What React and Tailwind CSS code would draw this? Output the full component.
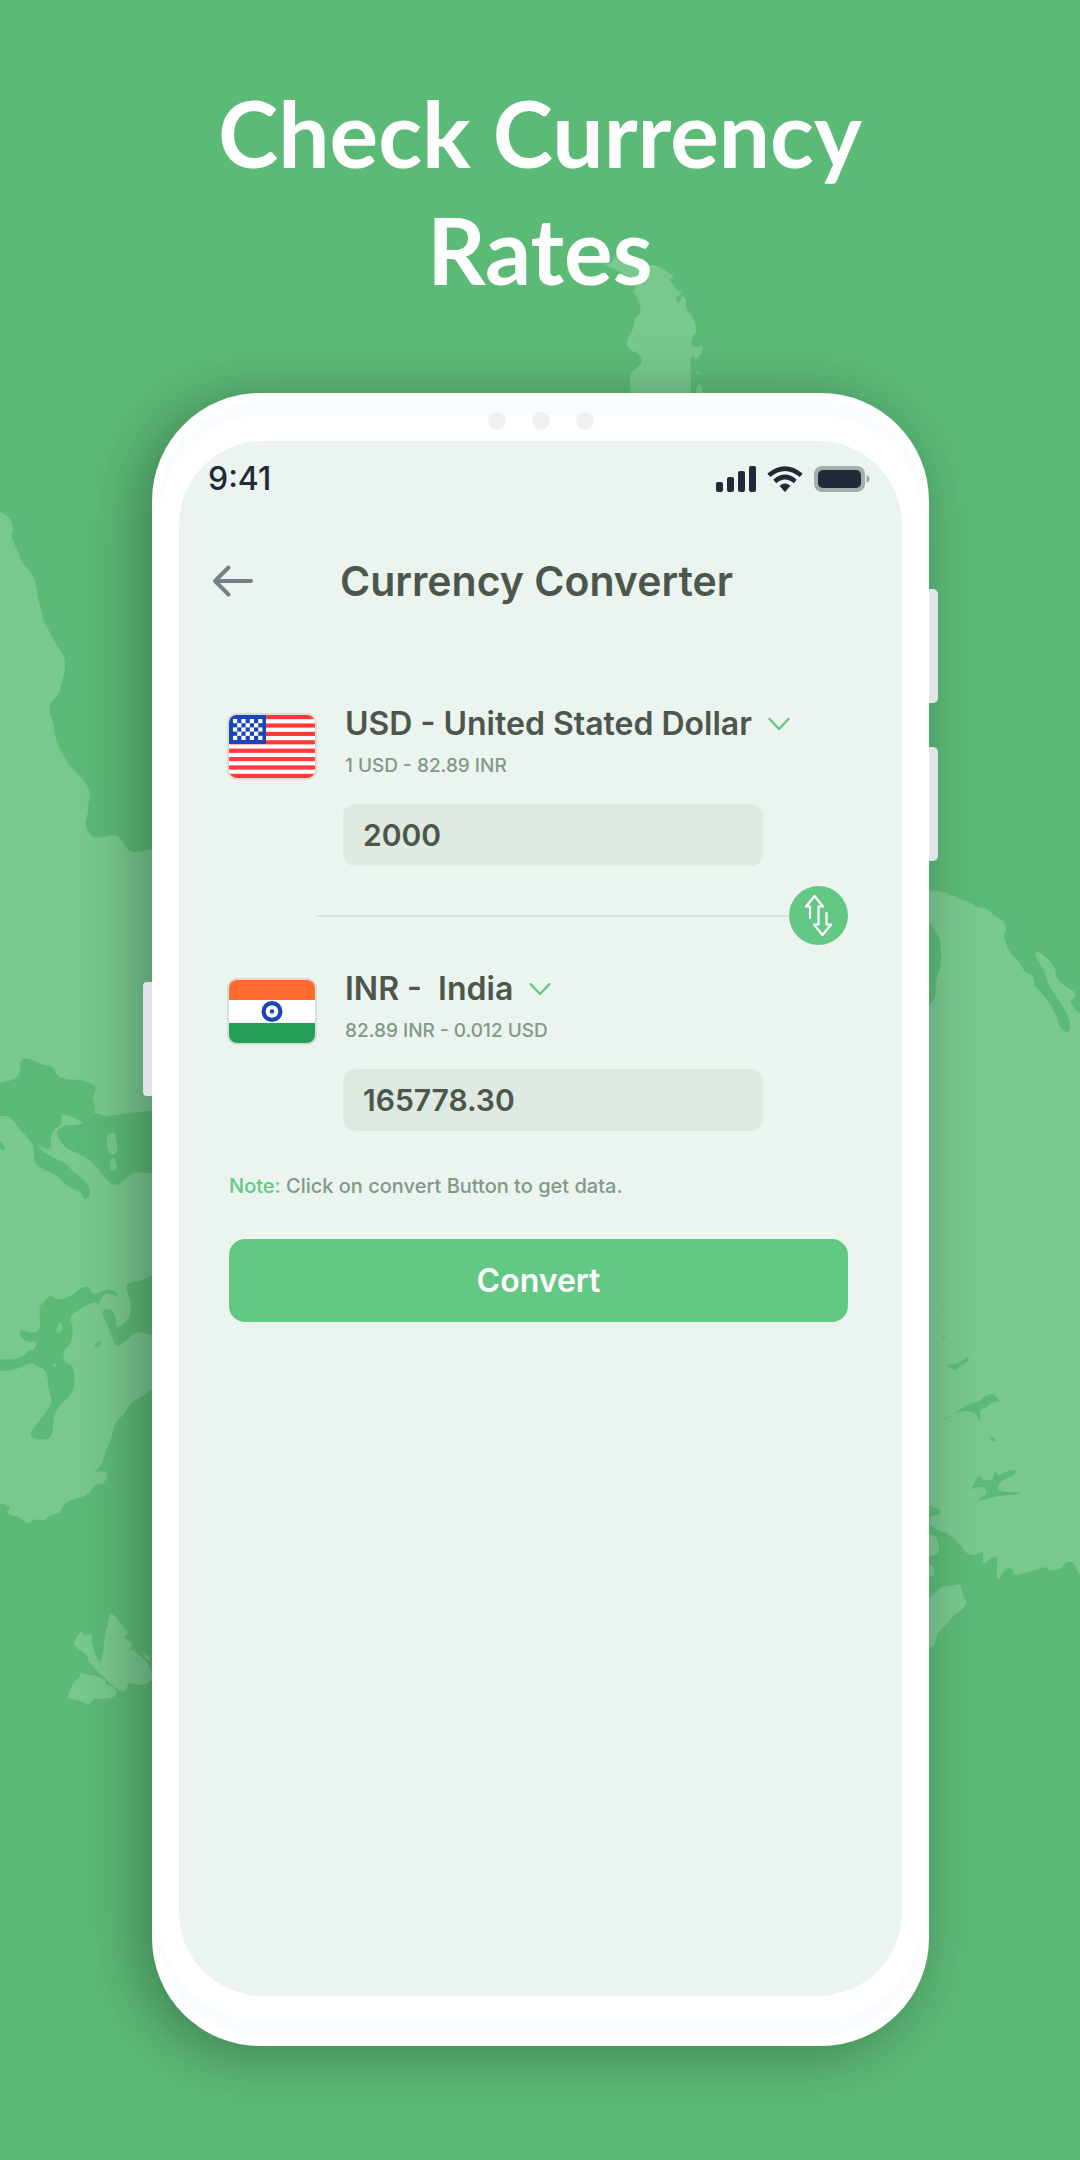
import React, { useState } from "react";

const RATE = 82.88915;

// Closed outline through the midpoints of the given points
const smooth = (text) => {
    const pts = text.split(" ").map((p) => p.split(",").map(Number));
    const mid = (a, b) => `${(a[0] + b[0]) / 2},${(a[1] + b[1]) / 2}`;
    const last = pts[pts.length - 1];
    const curves = pts.map((p, i) => `Q${p[0]},${p[1]} ${mid(p, pts[(i + 1) % pts.length])}`);
    return `M${mid(last, pts[0])}${curves.join("")}Z`;
};

const LAND = [
    "-20,505 0,512 9,516 13,526 13,532 11,537 14,543 18,551 22,563 32,573 36,584 38,599 41,608 42,618 50,633 58,648 65,656 65,672 61,684 60,693 50,703 49,712 54,723 55,739 62,753 70,767 83,778 91,793 88,804 88,813 85,824 88,832 94,839 107,836 119,835 126,849 134,853 152,849 200,845 200,1110 152,1110 138,1112 128,1113 105,1117 100,1113 93,1114 96,1106 91,1098 98,1088 85,1080 62,1079 56,1074 53,1066 42,1065 26,1057 19,1062 21,1069 17,1079 0,1083 -20,1083",
    "-20,1116 0,1116 10,1116 19,1129 33,1143 34,1152 34,1163 44,1170 56,1175 70,1188 82,1192 83,1200 90,1197 90,1189 85,1180 74,1173 66,1163 58,1160 49,1155 39,1149 40,1145 47,1150 52,1146 50,1137 54,1129 62,1125 61,1113 70,1116 82,1121 82,1125 64,1125 56,1131 58,1138 66,1149 85,1156 98,1168 108,1182 116,1186 124,1181 134,1171 152,1174 200,1174 200,1388 152,1388 146,1395 136,1400 130,1403 124,1415 114,1423 112,1438 105,1452 102,1465 92,1473 109,1470 104,1485 96,1483 90,1493 80,1498 70,1500 62,1506 60,1514 52,1514 42,1522 34,1518 28,1525 22,1518 4,1513 13,1507 0,1503 -20,1500",
    "106,1136 111,1132 116,1133 118,1152 114,1155 108,1154",
    "110,1160 113,1157 117,1163 117,1170 110,1172",
    "110,1611 118,1620 130,1634 122,1637 133,1643 132,1648 120,1654 130,1648 142,1656 152,1670 152,1682 140,1686 128,1681 127,1690 120,1692 110,1683 98,1672 87,1660 88,1655 73,1646 75,1639 82,1630 84,1637 92,1632 92,1645 99,1664 103,1655 105,1633 108,1624",
    "68,1696 73,1682 80,1678 80,1672 88,1675 96,1675 107,1681 105,1685 115,1687 117,1696 108,1699 92,1698 90,1706 80,1700 68,1699",
    "142,1650 150,1657 151,1662 144,1657",
    "596,262 610,266 616,254 624,258 634,260 643,268 652,264 662,268 676,278 668,278 675,287 677,291 682,291 680,296 675,296 679,305 682,296 686,298 686,310 693,316 697,332 692,336 691,346 697,348 703,344 702,353 695,361 694,355 690,358 691,372 691,420 628,420 631,382 629,374 643,363 640,355 630,350 625,343 634,328 634,319 642,312 638,298 632,291 637,287 632,284 625,274 612,268",
    "696,388 700,383 702,388 703,400 696,400",
    "695,371 700,372 699,375",
    "880,885 929,891 935,890 948,893 958,899 968,901 978,908 987,908 995,917 1003,920 1007,928 1003,936 1009,952 1022,965 1024,972 1035,977 1033,985 1042,993 1051,1006 1057,1017 1060,1029 1070,1034 1070,1019 1060,1002 1052,990 1048,984 1045,971 1035,957 1036,951 1042,953 1056,968 1055,977 1066,987 1076,992 1075,998 1069,1002 1080,1015 1100,1020 1100,1590 1080,1578 1075,1564 1067,1560 1062,1569 1048,1571 1047,1566 1030,1572 1013,1576 1013,1568 1005,1568 999,1581 996,1576 998,1554 990,1559 982,1566 984,1550 975,1556 965,1553 959,1542 945,1532 936,1530 929,1522 880,1500",
    "920,1536 934,1534 939,1542 939,1552 934,1556 920,1556",
    "920,1563 933,1564 935,1574 930,1577 920,1577",
    "920,1600 929,1599 938,1589 946,1585 950,1587 961,1583 963,1597 968,1603 960,1611 950,1619 948,1623 937,1633 935,1645 929,1648 920,1648",
];

const WATER = [
    "-20,1359 0,1359 12,1360 24,1356 29,1350 37,1346 36,1340 28,1343 20,1337 20,1328 31,1334 40,1330 40,1318 39,1306 45,1302 50,1294 56,1300 68,1298 84,1286 91,1288 92,1296 108,1288 117,1292 119,1297 104,1292 99,1305 95,1302 88,1304 82,1308 71,1315 70,1322 73,1324 72,1343 63,1350 64,1363 74,1365 75,1388 68,1398 54,1411 53,1430 50,1439 38,1440 29,1436 35,1426 50,1407 52,1400 48,1387 47,1370 35,1366 32,1362 16,1370 0,1371 -20,1371",
    "200,1266 152,1275 140,1281 125,1283 129,1297 131,1303 130,1318 116,1330 116,1316 110,1308 100,1311 110,1330 115,1347 121,1345 137,1330 152,1336 200,1340",
    "95,1343 102,1340 100,1347 95,1348",
    "-10,1130 0,1140 7,1151 0,1149 -10,1140",
    "920,920 929,921 937,933 941,943 941,967 936,979 936,997 929,1006 920,1006",
    "940,1306 943,1305 942,1308",
    "942,1337 946,1335 944,1339",
    "944,1364 950,1365 956,1364 964,1360 968,1356 969,1361 960,1366 955,1371 949,1366",
    "941,1420 946,1419 954,1414 970,1402 978,1403 984,1396 994,1393 1001,1403 992,1401 987,1408 979,1409 982,1424 974,1411 960,1411",
    "970,1491 979,1474 983,1481 993,1480 993,1474 997,1470 997,1477 1009,1470 1018,1470 1012,1477 1005,1478 996,1487 1002,1492 1020,1492 1020,1495 1000,1495 977,1502 980,1497 988,1494 984,1487 976,1487",
    "920,1504 932,1506 942,1511 939,1515 929,1516 931,1530 920,1530",
    "990,1436 995,1437 996,1443 991,1440",
];

const ISLES = [
    "56,1331 59,1322 63,1324 62,1331 57,1334",
    "100,1309 101,1297 107,1293 111,1301 107,1309",
    "30,1349 33,1346 35,1349 32,1351",
    "52,1365 55,1363 57,1366 54,1367",
];

const MapBackground = () => (
    <svg
        aria-hidden="true"
        viewBox="0 0 1080 2160"
        preserveAspectRatio="xMidYMid slice"
        className="absolute inset-0 w-full h-full"
    >
        <g fill="#78c88f">{LAND.map((p) => <path key={p} d={smooth(p)} />)}</g>
        <g fill="#5cba77">{WATER.map((p) => <path key={p} d={smooth(p)} />)}</g>
        <g fill="#78c88f">{ISLES.map((p) => <path key={p} d={smooth(p)} />)}</g>
    </svg>
);

const StatusIcons = () => (
    <div className="flex items-center gap-[11px] text-[#1f2c37]">
        <svg width="40" height="26" viewBox="0 0 40 26" fill="currentColor" aria-hidden="true">
            <rect x="0" y="16" width="7" height="10" rx="2" />
            <rect x="11" y="11" width="7" height="15" rx="2" />
            <rect x="22" y="5" width="7" height="21" rx="2" />
            <rect x="33" y="0" width="7" height="26" rx="2" />
        </svg>
        <svg width="36" height="26" viewBox="0 0 36 26" fill="none" stroke="currentColor" strokeWidth="4.6" aria-hidden="true">
            <path d="M1.8 9.3 Q18 -4.2 34.2 9.3" />
            <path d="M7.8 15.4 Q18 6.6 28.2 15.4" />
            <path d="M12.6 19.8 Q18 15 23.4 19.8 L18.6 25.4 Q18 26 17.4 25.4Z" fill="currentColor" stroke="none" />
        </svg>
        <svg width="56" height="26" viewBox="0 0 56 26" fill="#1f2c37" aria-hidden="true">
            <rect width="51" height="26" rx="8" fillOpacity="0.35" />
            <rect x="4" y="4" width="43" height="18" rx="5" />
            <path d="M52.5 9 Q55.6 10.5 55.6 13 Q55.6 15.5 52.5 17Z" fillOpacity="0.4" />
        </svg>
    </div>
);

const UsFlag = () => (
    <svg viewBox="0 0 86 63" className="block w-full" role="img" aria-label="United States">
        <rect width="86" height="63" fill="#fff" />
        {[0, 1, 2, 3, 4, 5, 6, 7].map((i) => (
            <rect key={i} y={i * 8.4} width="86" height="4.2" fill="#ff3a3a" />
        ))}
        <rect width="37" height="29" fill="#1a47b8" />
        {[0, 1, 2, 3, 4].map((row) =>
            [0, 1, 2, 3, 4, 5, 6]
                .filter((col) => (row + col) % 2 === 0)
                .map((col) => (
                    <rect key={`${row}-${col}`} x={4 + col * 4.2} y={4 + row * 4.2} width="4.2" height="4.2" fill="#fff" />
                ))
        )}
    </svg>
);

const InFlag = () => (
    <svg viewBox="0 0 86 63" className="block w-full" role="img" aria-label="India">
        <rect width="86" height="63" fill="#fff" />
        <rect width="86" height="20" fill="#ff6c2d" />
        <rect y="43" width="86" height="20" fill="#249f58" />
        <circle cx="43" cy="31.5" r="8.4" fill="none" stroke="#1a47b8" strokeWidth="4.2" />
        <circle cx="43" cy="31.5" r="2.2" fill="#1a47b8" />
    </svg>
);

const CurrencyRow = ({ id, flag, name, rate, value, onChange }) => (
    <div className="flex items-start gap-[26px]">
        <div className="w-[90px] shrink-0 rounded-[10px] border-2 border-[#d3dfd7] overflow-hidden">{flag}</div>
        <div className="flex-1 min-w-0 mr-[85px]">
            <div className="flex items-center gap-[16px] h-8 -mt-[5px] pl-[2px]">
                <select
                    aria-label={`${id} currency`}
                    className="appearance-none field-sizing-content shrink-0 bg-transparent text-[32px] leading-8 font-semibold text-[#4b564c] outline-none"
                >
                    <option>{name}</option>
                </select>
                <svg width="22" height="14" viewBox="0 0 22 14" fill="none" stroke="#64c885" strokeWidth="2.4" strokeLinecap="round" strokeLinejoin="round" className="pointer-events-none shrink-0" aria-hidden="true">
                    <path d="M1.5 2 L11 12 L20.5 2" />
                </svg>
            </div>
            <label htmlFor={id} className="block mt-[14px] pl-[2px] text-[19px] leading-6 font-medium text-[#7f9a86]">
                {rate}
            </label>
            <input
                id={id}
                value={value}
                onChange={onChange}
                inputMode="decimal"
                className="block w-full h-[62px] mt-[26px] px-5 rounded-xl bg-[#dfeae1] text-[30px] font-semibold text-[#4b564c] outline-none"
            />
        </div>
    </div>
);

const App = () => {
    const [usd, setUsd] = useState("2000");
    const [inr, setInr] = useState("165778.30");

    const convert = () => {
        setInr(((parseFloat(usd) || 0) * RATE).toFixed(2));
    };

    const swap = () => {
        setUsd(inr);
        setInr(usd);
    };

    return (
        <div className="relative min-h-screen overflow-hidden bg-[#5cba77] font-['Inter',sans-serif]">
            <MapBackground />

            <main className="relative pt-[74px] pb-[114px]">
                <h1 className="max-w-[760px] mx-auto text-center text-white font-['Lato',sans-serif] font-bold text-[91px] leading-[117px]">
                    Check Currency Rates
                </h1>

                {/* Phone */}
                <div className="relative ml-[152px] mr-[151px] mt-[85px] px-[7px] pt-[7px] pb-[10px] rounded-[108px] bg-white shadow-[-12px_8px_60px_rgba(0,0,0,0.32)]">
                    <span className="absolute -left-[9px] top-[589px] w-[9px] h-[114px] rounded-l-[4px] bg-[#e4e3ea]" />
                    <span className="absolute -right-[9px] top-[196px] w-[9px] h-[114px] rounded-r-[5px] bg-[#e4e3ea]" />
                    <span className="absolute -right-[9px] top-[354px] w-[9px] h-[114px] rounded-r-[5px] bg-[#e4e3ea]" />
                    <div className="absolute inset-x-0 top-[19px] flex justify-center gap-[26px]">
                        <span className="w-[18px] h-[18px] rounded-full bg-[#f0f0f0]" />
                        <span className="w-[18px] h-[18px] rounded-full bg-[#f0f0f0]" />
                        <span className="w-[18px] h-[18px] rounded-full bg-[#f0f0f0]" />
                    </div>

                    <div className="py-[15px] rounded-[104px] bg-[#f9fdff]">
                        <div className="px-[20px] pt-[26px] pb-[25px] rounded-[104px] bg-white">
                            {/* Screen */}
                            <div className="min-h-[1555px] pt-[20px] rounded-[84px] bg-[#ebf4ef]">
                                <div className="flex items-center justify-between pl-[29px] pr-[32px] h-9">
                                    <span className="text-[32px] leading-9 font-medium text-[#1f2c37]">9:41</span>
                                    <StatusIcons />
                                </div>

                                <header className="relative flex items-center justify-center mt-[60px] h-12 pr-[8px]">
                                    <button aria-label="Back" className="absolute left-[32px]">
                                        <svg width="44" height="36" viewBox="0 0 44 36" fill="none" stroke="#758084" strokeWidth="4" strokeLinecap="round" strokeLinejoin="round">
                                            <path d="M40 18 H4 M17.5 4.5 L4 18 L17.5 31.5" />
                                        </svg>
                                    </button>
                                    <h2 className="text-[41px] leading-[48px] font-semibold text-[#4b564c]">Currency Converter</h2>
                                </header>

                                <div className="pl-[48px] pr-[54px] mt-[108px]">
                                    <CurrencyRow
                                        id="usd"
                                        flag={<UsFlag />}
                                        name="USD - United Stated Dollar"
                                        rate="1 USD - 82.89 INR"
                                        value={usd}
                                        onChange={(e) => setUsd(e.target.value)}
                                    />

                                    <div className="flex items-center mt-[20px] pl-[90px]">
                                        <div className="flex-1 h-[2px] bg-[#dde3df]" />
                                        <button
                                            onClick={swap}
                                            aria-label="Swap currencies"
                                            className="w-[59px] h-[59px] rounded-full bg-[#64c885]"
                                        >
                                            <svg viewBox="0 0 59 59" fill="none" stroke="#fff" strokeWidth="2.2" strokeLinejoin="round" strokeLinecap="round">
                                                <path d="M21 32 V20.5 H17 L25.500 10 L34 20.5 H29.500 V38.5 H25 L33.5 49 L42 38.5 H37.500 V27" />
                                            </svg>
                                        </button>
                                    </div>

                                    <div className="mt-[33px]">
                                        <CurrencyRow
                                            id="inr"
                                            flag={<InFlag />}
                                            name={"INR -\u00a0 India"}
                                            rate="82.89 INR - 0.012 USD"
                                            value={inr}
                                            onChange={(e) => setInr(e.target.value)}
                                        />
                                    </div>

                                    <div className="pl-[2px]">
                                        <p className="mt-[43px] text-[20px] leading-6 font-medium text-[#7f9a86]">
                                            <span className="text-[#64c885]">Note:</span> Click on convert Button to get data.
                                        </p>

                                        <button
                                            onClick={convert}
                                            className="block w-full h-[83px] mt-[41px] rounded-2xl bg-[#64c885] text-[32px] font-semibold text-white"
                                        >
                                            Convert
                                        </button>
                                    </div>
                                </div>
                            </div>
                        </div>
                    </div>
                </div>
            </main>
        </div>
    );
};

export default App;
